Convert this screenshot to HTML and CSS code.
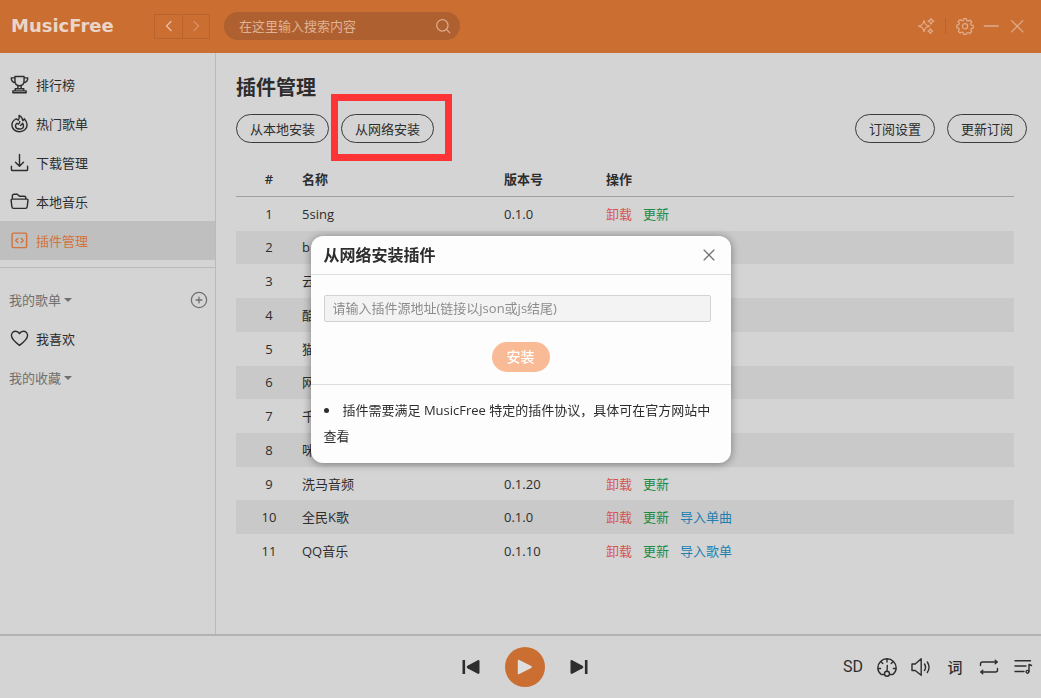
FILE: index.html
```html
<!DOCTYPE html>
<html lang="zh-CN">
<head>
<meta charset="utf-8">
<title>MusicFree</title>
<link rel="stylesheet" href="styles.css">
</head>
<body>
<div class="app">
  <header class="topbar">
    <div class="logo">MusicFree</div>
    <div class="history">
      <button class="history-btn" aria-label="后退"><svg class="icon" viewBox="0 0 20 20"><path d="M12 5.500L7.500 10l4.500 4.500"/></svg></button>
      <button class="history-btn history-off" aria-label="前进"><svg class="icon" viewBox="0 0 20 20"><path d="M8 5.500L12.500 10 8 14.500"/></svg></button>
    </div>
    <form class="search">
      <input class="search-input" type="text" aria-label="搜索" placeholder="在这里输入搜索内容">
      <button class="icon-btn" type="button" aria-label="搜索"><svg class="icon" viewBox="0 0 20 20"><circle cx="9.300" cy="9.300" r="6.300"/><path d="M13.800 13.800l3.600 3.600"/></svg></button>
    </form>
    <div class="window-tools">
      <button class="icon-btn" aria-label="主题"><svg class="icon" viewBox="0 0 20 20"><path d="M7.800 3.900c.8 4 2 5.300 6 6.200-4 .9-5.200 2.200-6 6.200-.8-4-2-5.300-6-6.200 4-.9 5.200-2.200 6-6.200zM15.500 1.500c.5 2 1.100 2.700 3.200 3.200-2.100.5-2.700 1.200-3.200 3.200-.5-2-1.100-2.700-3.200-3.200 2.100-.5 2.700-1.200 3.200-3.200zM14.800 13c.4 1.600.9 2.200 2.600 2.600-1.700.4-2.200 1-2.600 2.600-.4-1.600-.9-2.200-2.600-2.600 1.700-.4 2.200-1 2.600-2.600z"/></svg></button>
      <span class="tools-line"></span>
      <button class="icon-btn" aria-label="设置"><svg class="icon" viewBox="0 0 20 20"><path d="M8.500 1.800h3l.5 2.200 1.500.6 1.900-1.200 2.100 2.100-1.200 1.900.6 1.500 2.200.5v3l-2.200.5-.6 1.500 1.200 1.900-2.100 2.100-1.900-1.200-1.500.6-.5 1.500h-3L8 17.300l-1.500-.6-1.900 1.200-2.100-2.100 1.200-1.900-.6-1.500-2.200-.5v-3l2.200-.5.6-1.500-1.200-1.900 2.100-2.100 1.900 1.200L8 4z"/><circle cx="10" cy="10.300" r="2.900"/></svg></button>
      <button class="icon-btn" aria-label="最小化"><svg class="icon" viewBox="0 0 20 20"><path d="M2.500 10h15.500"/></svg></button>
      <button class="icon-btn" aria-label="关闭"><svg class="icon" viewBox="0 0 20 20"><path d="M4 4l12.500 12.500M16.500 4L4 16.500"/></svg></button>
    </div>
  </header>

  <div class="middle">
    <nav class="sidebar">
      <a class="side-item" href="#"><svg class="icon" viewBox="0 0 20 20"><path d="M5.200 1.500h9.600v4.800c0 3-2 5-4.800 5s-4.800-2-4.800-5zM5.200 3H1.300c0 3 1.400 5 4.500 5.300M14.800 3h3.900c0 3-1.400 5-4.500 5.300M8.300 11v3.500M11.700 11v3.500M5.500 14.500h9v2.200h-9zM3 18.700v-2h14v2z"/></svg>排行榜</a>
      <a class="side-item" href="#"><svg class="icon" viewBox="0 0 20 20"><path d="M9.500 1.500c.6 2 .3 3.500-.8 5L6.500 5C4 6.500 2 8.500 2 11.500c0 4.200 3.600 7.200 8 7.200s8-3 8-7.400c0-3-1.500-4.600-3-6.200-.3 1-.7 1.500-1.500 2-.4-2.500-1.600-4.500-4-5.600z"/><path d="M10.200 7.800c.2 1.600-.3 2.200-1.400 3L7.300 9.700c-1 .8-1.500 1.600-1.500 2.700 0 2 1.800 3.400 4.200 3.400s4.200-1.400 4.200-3.500c0-1.200-.5-1.900-1-2.500-.5 1.200-1 1.600-2.200 2.200"/></svg>热门歌单</a>
      <a class="side-item" href="#"><svg class="icon" viewBox="0 0 20 20"><path d="M10 1.500v12.300M5.800 9.800L10 14l4.200-4.200M1.500 14v3.300c0 .7.400 1.200 1.200 1.200h14.600c.8 0 1.200-.5 1.200-1.200V14"/></svg>下载管理</a>
      <a class="side-item" href="#"><svg class="icon" viewBox="0 0 20 20"><path d="M2.500 7.500V4c0-1 .7-1.700 1.700-1.700h3.500L10 4.500h5c1 0 1.700.6 1.700 1.600v1.400M2.300 7.500h15.500c.8 0 1.200.6 1.100 1.300l-.8 6.700c-.1 1-.8 1.700-1.800 1.700H3.800c-1 0-1.700-.7-1.800-1.700l-.8-6.700c-.1-.7.300-1.300 1.100-1.300z"/></svg>本地音乐</a>
      <a class="side-item side-active" href="#"><svg class="icon" viewBox="0 0 20 20"><rect x="2.200" y="2.200" width="15.300" height="15.300" rx="1.500"/><path d="M8.200 7.800L6 10l2.200 2.200M11.800 7.800L14 10l-2.200 2.200"/></svg>插件管理</a>
      <div class="side-line"></div>
      <div class="side-group">
        <button class="group-name">我的歌单<span class="caret"></span></button>
        <button class="icon-btn" aria-label="新建歌单"><svg class="icon" viewBox="0 0 20 20"><circle cx="10" cy="10" r="8.500"/><path d="M10 6.800v6.400M6.800 10h6.400"/></svg></button>
      </div>
      <a class="side-item" href="#"><svg class="icon" viewBox="0 0 20 20"><path d="M10 17.300C5 13.500 1.500 10.500 1.500 6.900c0-2.600 1.900-4.600 4.400-4.600 1.800 0 3.200.9 4.100 2.500.9-1.600 2.300-2.500 4.100-2.500 2.500 0 4.400 2 4.400 4.600 0 3.600-3.500 6.600-8.500 10.400z"/></svg>我喜欢</a>
      <div class="side-group">
        <button class="group-name">我的收藏<span class="caret"></span></button>
      </div>
    </nav>

    <main class="content">
      <h1 class="title">插件管理</h1>
      <div class="actions">
        <button class="pill">从本地安装</button>
        <span class="marked"><button class="pill">从网络安装</button></span>
        <button class="pill push-right">订阅设置</button>
        <button class="pill">更新订阅</button>
      </div>
      <table class="plugins">
        <thead>
          <tr><th class="col-no">#</th><th class="col-name">名称</th><th class="col-ver">版本号</th><th>操作</th></tr>
        </thead>
        <tbody>
          <tr><td class="col-no">1</td><td>5sing</td><td>0.1.0</td><td><a class="op op-del" href="#">卸载</a><a class="op op-upd" href="#">更新</a></td></tr>
          <tr><td class="col-no">2</td><td>b</td><td></td><td></td></tr>
          <tr><td class="col-no">3</td><td>云</td><td></td><td></td></tr>
          <tr><td class="col-no">4</td><td>酷</td><td></td><td></td></tr>
          <tr><td class="col-no">5</td><td>猫</td><td></td><td></td></tr>
          <tr><td class="col-no">6</td><td>网</td><td></td><td></td></tr>
          <tr><td class="col-no">7</td><td>千</td><td></td><td></td></tr>
          <tr><td class="col-no">8</td><td>咪</td><td></td><td></td></tr>
          <tr><td class="col-no">9</td><td>洗马音频</td><td>0.1.20</td><td><a class="op op-del" href="#">卸载</a><a class="op op-upd" href="#">更新</a></td></tr>
          <tr><td class="col-no">10</td><td>全民K歌</td><td>0.1.0</td><td><a class="op op-del" href="#">卸载</a><a class="op op-upd" href="#">更新</a><a class="op op-imp" href="#">导入单曲</a></td></tr>
          <tr><td class="col-no">11</td><td>QQ音乐</td><td>0.1.10</td><td><a class="op op-del" href="#">卸载</a><a class="op op-upd" href="#">更新</a><a class="op op-imp" href="#">导入歌单</a></td></tr>
        </tbody>
      </table>
    </main>
  </div>

  <footer class="player">
    <div class="transport">
      <button class="icon-btn" aria-label="上一首"><svg class="icon solid" viewBox="0 0 20 20"><path d="M1.500 3h2.600v14H1.500z"/><path d="M16.800 3.200c.9-.3 1.700.2 1.700 1.200v11.200c0 1-.8 1.500-1.700 1.200L6.500 11.300c-1.100-.6-1.100-2 0-2.600z"/></svg></button>
      <button class="play" aria-label="播放"><svg class="icon solid" viewBox="0 0 20 20"><path d="M2 3.100c0-1 .8-1.500 1.700-1L16.900 9c1 .5 1 1.500 0 2L3.700 17.900c-.9.500-1.700 0-1.700-1z"/></svg></button>
      <button class="icon-btn" aria-label="下一首"><svg class="icon solid" viewBox="0 0 20 20"><path d="M15.900 3h2.600v14h-2.600z"/><path d="M3.200 3.200c-.9-.3-1.700.2-1.700 1.200v11.200c0 1 .8 1.500 1.700 1.200l10.300-5.500c1.100-.6 1.100-2 0-2.600z"/></svg></button>
    </div>
    <div class="extras">
      <button class="icon-btn quality">SD</button>
      <button class="icon-btn" aria-label="倍速"><svg class="icon" viewBox="0 0 20 20"><path d="M6.500 17.500H4.200C2.300 16 .8 13.800.8 11 .8 5.900 5 1.800 10 1.800s9.200 4.100 9.200 9.200c0 2.800-1.500 5-3.400 6.500h-2.300M10 2v3M4 4.800L5.800 6.600M16 4.800l-1.800 1.800M1 11.500h2.600M19 11.500h-2.600M10.300 8.500l-.3 5.800"/><circle cx="10" cy="16.800" r="2.500"/></svg></button>
      <button class="icon-btn" aria-label="音量"><svg class="icon" viewBox="0 0 20 20"><path d="M1 7v6.500h3.200l6 4.700V1.800l-6 5.200zM13.500 7c1.300 2 1.300 4.500 0 6.500M16.300 5c2.200 3.300 2.200 7.200 0 10.500"/></svg></button>
      <button class="icon-btn lyric">词</button>
      <button class="icon-btn" aria-label="循环播放"><svg class="icon" viewBox="0 0 20 20"><path d="M1.500 8.500V7c0-1.300.7-2 2-2h14.500M16.200 3.300L18.300 5l-2.100 1.700M18.500 11.500V13c0 1.300-.7 2-2 2H2M3.800 13.300L1.700 15l2.100 1.700"/></svg></button>
      <button class="icon-btn" aria-label="播放列表"><svg class="icon" viewBox="0 0 20 20"><path d="M2 3.800h15.500M2 9h11M2 14.500h9M16 14.500V7.500l2.500 1"/><circle cx="14.500" cy="14.800" r="1.400"/></svg></button>
    </div>
  </footer>
</div>

<div class="overlay">
  <section class="dialog" role="dialog" aria-labelledby="dialog-title">
    <div class="dialog-head">
      <h2 class="dialog-title" id="dialog-title">从网络安装插件</h2>
      <button class="icon-btn dialog-close" aria-label="关闭"><svg class="icon" viewBox="0 0 20 20"><path d="M4.500 4.500l11 11M15.500 4.500l-11 11"/></svg></button>
    </div>
    <form class="dialog-form">
      <input class="source" type="text" aria-label="插件源地址" placeholder="请输入插件源地址(链接以json或js结尾)">
      <button class="install" type="button">安装</button>
    </form>
    <ul class="dialog-notes"><li>插件需要满足 MusicFree 特定的插件协议，具体可在官方网站中查看</li></ul>
  </section>
</div>
</body>
</html>
```
FILE: styles.css
```css
* { box-sizing: border-box; }

body {
  margin: 0;
  font: 13px/20px "Open Sans", "Noto Sans CJK SC", sans-serif;
  color: #2d2d2d;
  background: #d4d4d4;
}

button, input {
  font: inherit;
  color: inherit;
  margin: 0;
}

button {
  padding: 0;
  border: 0;
  background: none;
}

a { color: inherit; text-decoration: none; }

.icon {
  display: block;
  width: 20px;
  height: 20px;
  fill: none;
  stroke: currentColor;
  stroke-width: 1.4;
  stroke-linecap: round;
  stroke-linejoin: round;
}

.icon.solid { fill: currentColor; stroke: none; }

.icon-btn { flex: none; }

.app {
  display: flex;
  flex-direction: column;
  min-height: 100vh;
}

/* top bar */
.topbar {
  display: flex;
  align-items: center;
  height: 53px;
  padding: 0 15px 1px 11px;
  background: #ca6e32;
  color: #e0ac8b;
}

.logo {
  width: 143px;
  font: bold 18px/24px "DejaVu Sans", sans-serif;
  color: #ead5c9;
}

.history { display: flex; border: 1px solid #ba642d; }

.history-btn {
  display: grid;
  place-items: center;
  width: 27px;
  height: 23px;
  color: #e6bea5;
}

.history-off { border-left: 1px solid #ba642d; color: #d98f62; }

.search {
  display: flex;
  align-items: center;
  width: 236px;
  height: 28px;
  margin-left: 14px;
  padding: 0 8px 0 15px;
  border-radius: 14px;
  background: #ae6030;
}

.search-input {
  flex: 1;
  min-width: 0;
  padding: 0;
  border: 0;
  outline: 0;
  background: none;
}

.search-input::placeholder { color: #dfb294; opacity: 1; }

.search .icon { width: 18px; height: 18px; }

.window-tools {
  display: flex;
  align-items: center;
  gap: 8px;
  margin-left: auto;
}

.window-tools .icon { width: 18px; height: 18px; }

.tools-line {
  width: 1px;
  height: 16px;
  margin: 0 2px;
  background: #b5632f;
}

/* sidebar */
.middle { display: flex; flex: 1; }

.sidebar {
  flex: none;
  width: 216px;
  padding-top: 12px;
  border-right: 1px solid #bababa;
}

.side-item {
  display: flex;
  align-items: center;
  gap: 7px;
  height: 39px;
  padding-left: 10px;
}

.side-item .icon { width: 19px; height: 19px; stroke-width: 1.5; }

.side-active { background: #bfbfbf; color: #d4723a; }

.side-line { height: 1px; margin: 7px 0 12px; background: #bababa; }

.side-group {
  display: flex;
  align-items: center;
  justify-content: space-between;
  height: 39px;
  padding: 0 7px 0 9px;
  color: #707070;
}

.side-group .icon { width: 18px; height: 18px; }

.group-name { display: flex; align-items: center; gap: 3px; }

.caret {
  border: 4px solid transparent;
  border-top-color: currentColor;
  border-bottom: 0;
}

/* plugin page */
.content { flex: 1; min-width: 0; padding: 21px 14px 20px 20px; }

.title { margin: 0; font-size: 20px; line-height: 28px; }

.actions { display: flex; gap: 12px; margin-top: 12px; }

.pill {
  height: 29px;
  padding: 0 13px;
  border: 1px solid #3a3a3a;
  border-radius: 15px;
  white-space: nowrap;
}

.push-right { margin-left: auto; }

.marked { position: relative; display: flex; }

.marked::after {
  content: "";
  position: absolute;
  inset: -20px -18px -18px -10px;
  border: 7px solid #fc3436;
}

.plugins {
  width: calc(100% - 13px);
  height: 405px;
  margin-top: 20px;
  border-collapse: collapse;
  table-layout: fixed;
}

.plugins th { height: 33px; text-align: left; border-bottom: 1px solid #a0a0a0; font-weight: 600; }

.plugins th, .plugins td { padding: 0; }

.plugins .col-no { width: 66px; text-align: center; }

.col-name { width: 202px; }

.col-ver { width: 102px; }

.plugins tbody tr:nth-child(even) { background: #c9c9c9; }

.op { margin-right: 11px; }

.op-del { color: #d55450; }

.op-upd { color: #1c8a42; }

.op-imp { color: #1f7fb0; }

/* player bar */
.player {
  display: grid;
  grid-template-columns: 1fr auto 1fr;
  align-items: center;
  height: 64px;
  padding: 0 8px 0 17px;
  border-top: 2px solid #b2b2b2;
}

.transport { display: flex; grid-column: 2; align-items: center; gap: 24px; }

.play {
  display: grid;
  place-items: center;
  width: 40px;
  height: 40px;
  border-radius: 50%;
  background: #ca6e32;
  color: #dfdfdf;
}

.play .icon { width: 18px; height: 18px; }

.extras { display: flex; align-items: center; justify-content: flex-end; gap: 14px; }

.extras .icon-btn { width: 20px; }

.quality { font: 16px/20px "Liberation Sans Narrow", "Roboto", sans-serif; }

.lyric { font-size: 15px; font-weight: 500; }

/* install dialog */
.overlay {
  position: fixed;
  inset: 0;
  display: flex;
  align-items: center;
  justify-content: center;
}

.dialog {
  width: 420px;
  border-radius: 12px;
  background: #fdfdfd;
  box-shadow: 0 1px 8px rgba(0, 0, 0, 0.4);
}

.dialog-head {
  display: flex;
  align-items: center;
  justify-content: space-between;
  height: 39px;
  padding: 0 13px;
  border-bottom: 1px solid #dedede;
}

.dialog-title { margin: 0; font-size: 16px; line-height: 24px; font-weight: 600; }

.dialog-close { color: #707070; }

.dialog-close .icon { width: 18px; height: 18px; }

.dialog-form {
  display: grid;
  gap: 20px;
  padding: 20px 0 12px;
  border-bottom: 1px solid #dedede;
}

.source {
  height: 27px;
  margin: 0 20px 0 13px;
  padding: 0 8px;
  border: 1px solid #d2d2d2;
  border-radius: 2px;
  background: #f3f3f3;
}

.source::placeholder { color: #8c8c8c; opacity: 1; }

.install {
  justify-self: center;
  width: 58px;
  height: 30px;
  border-radius: 15px;
  background: #f8bb96;
  color: #fff;
  font-size: 14px;
  font-weight: 500;
}

.dialog-notes {
  margin: 0;
  padding: 12px 13px 14px;
  list-style-position: inside;
  line-height: 26px;
}
```
